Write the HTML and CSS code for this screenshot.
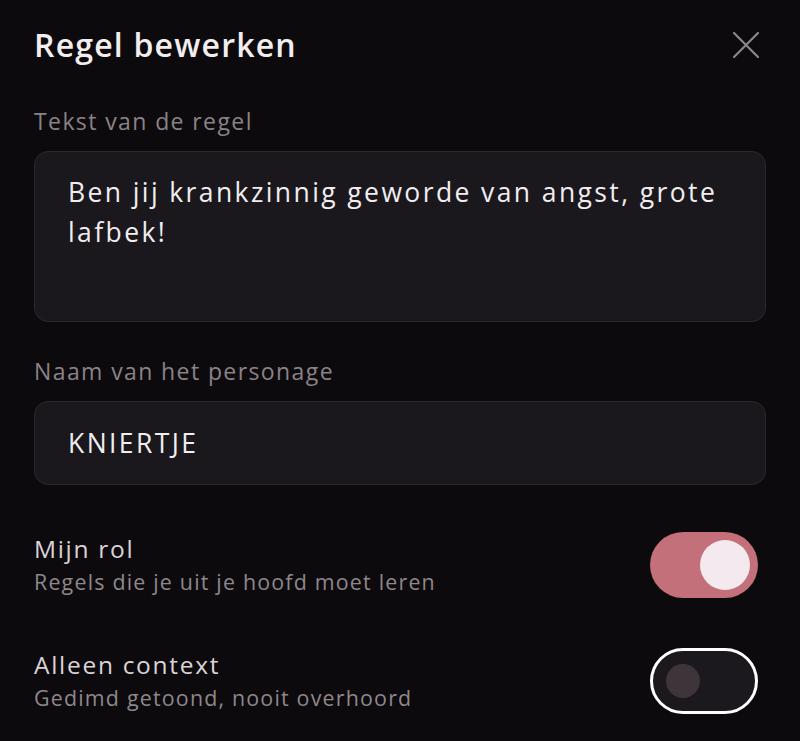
FILE: index.html
```html
<!DOCTYPE html>
<html lang="nl">

<head>
    <meta charset="UTF-8">
    <meta name="viewport" content="width=device-width, initial-scale=1.0">
    <title>Regel bewerken</title>
    <link rel="stylesheet" href="styles.css">
</head>

<body>
    <div class="sheet">
        <header class="sheet-header">
            <h1>Regel bewerken</h1>
            <button class="close" aria-label="Sluiten">
                <svg viewBox="0 0 26 26" width="26" height="26">
                    <path d="M1 1 L25 25 M25 1 L1 25" stroke="currentColor" stroke-width="2.2" stroke-linecap="round" fill="none" />
                </svg>
            </button>
        </header>

        <label class="field-label" for="lineText">Tekst van de regel</label>
        <div class="field field-area" id="lineText">Ben jij krankzinnig geworde van angst, grote lafbek!</div>

        <label class="field-label label-gap" for="charName">Naam van het personage</label>
        <div class="field field-input" id="charName">KNIERTJE</div>

        <div class="option-row first-row">
            <div class="option-text">
                <div class="option-title">Mijn rol</div>
                <div class="option-sub">Regels die je uit je hoofd moet leren</div>
            </div>
            <div class="toggle on"><span class="knob"></span></div>
        </div>

        <div class="option-row">
            <div class="option-text">
                <div class="option-title">Alleen context</div>
                <div class="option-sub">Gedimd getoond, nooit overhoord</div>
            </div>
            <div class="toggle off"><span class="knob"></span></div>
        </div>
    </div>
</body>

</html>
```

FILE: styles.css
```css
:root {
    --bg: #0c0a0d;
    --field-bg: #1a181c;
    --field-border: #2b282d;
    --text: #f1edf0;
    --muted: #8b8286;
    --accent: #c4707a;
}

* {
    margin: 0;
    padding: 0;
    box-sizing: border-box;
}

body {
    background-color: var(--bg);
    color: var(--text);
    font-family: 'Open Sans', 'Liberation Sans', sans-serif;
}

.sheet {
    padding: 24px 34px 0;
}

.sheet-header {
    display: flex;
    justify-content: space-between;
    align-items: center;
    height: 42px;
}

h1 {
    font-size: 32px;
    font-weight: 600;
    line-height: 42px;
    color: #f2eef0;
    letter-spacing: 1.2px;
}

.close {
    background: none;
    border: none;
    color: #8e8589;
    width: 26px;
    height: 26px;
    margin-right: 7px;
    display: flex;
}

.field-label {
    display: block;
    margin-top: 40px;
    margin-bottom: 15px;
    font-size: 23px;
    line-height: 30px;
    color: var(--muted);
    letter-spacing: 1.4px;
}

.label-gap {
    margin-top: 34px;
}

.field {
    background-color: var(--field-bg);
    border: 1px solid var(--field-border);
    border-radius: 14px;
    padding: 0 33px;
    font-size: 26.5px;
    color: var(--text);
    letter-spacing: 2.4px;
}

.field-area {
    height: 171px;
    padding-top: 20px;
    line-height: 40px;
}

.field-input {
    height: 84px;
    line-height: 82px;
}

.option-row {
    display: flex;
    justify-content: space-between;
    align-items: center;
    margin-top: 50px;
}

.first-row {
    margin-top: 47px;
}

.option-title {
    font-size: 24.5px;
    line-height: 34px;
    color: #dbd3d7;
    letter-spacing: 1.7px;
}

.option-sub {
    font-size: 21.4px;
    line-height: 32px;
    color: #8f878b;
    letter-spacing: 1.2px;
}

.toggle {
    width: 108px;
    height: 66px;
    border-radius: 33px;
    display: flex;
    align-items: center;
    margin-right: 8px;
}

.toggle.on {
    background-color: var(--accent);
    justify-content: flex-end;
    padding-right: 8px;
}

.toggle.on .knob {
    width: 50px;
    height: 50px;
    border-radius: 50%;
    background-color: #f3e9ee;
}

.toggle.off {
    background-color: #1b191d;
    border: 3px solid #ffffff;
    padding-left: 13px;
}

.toggle.off .knob {
    width: 34px;
    height: 34px;
    border-radius: 50%;
    background-color: #3d353a;
}
```
